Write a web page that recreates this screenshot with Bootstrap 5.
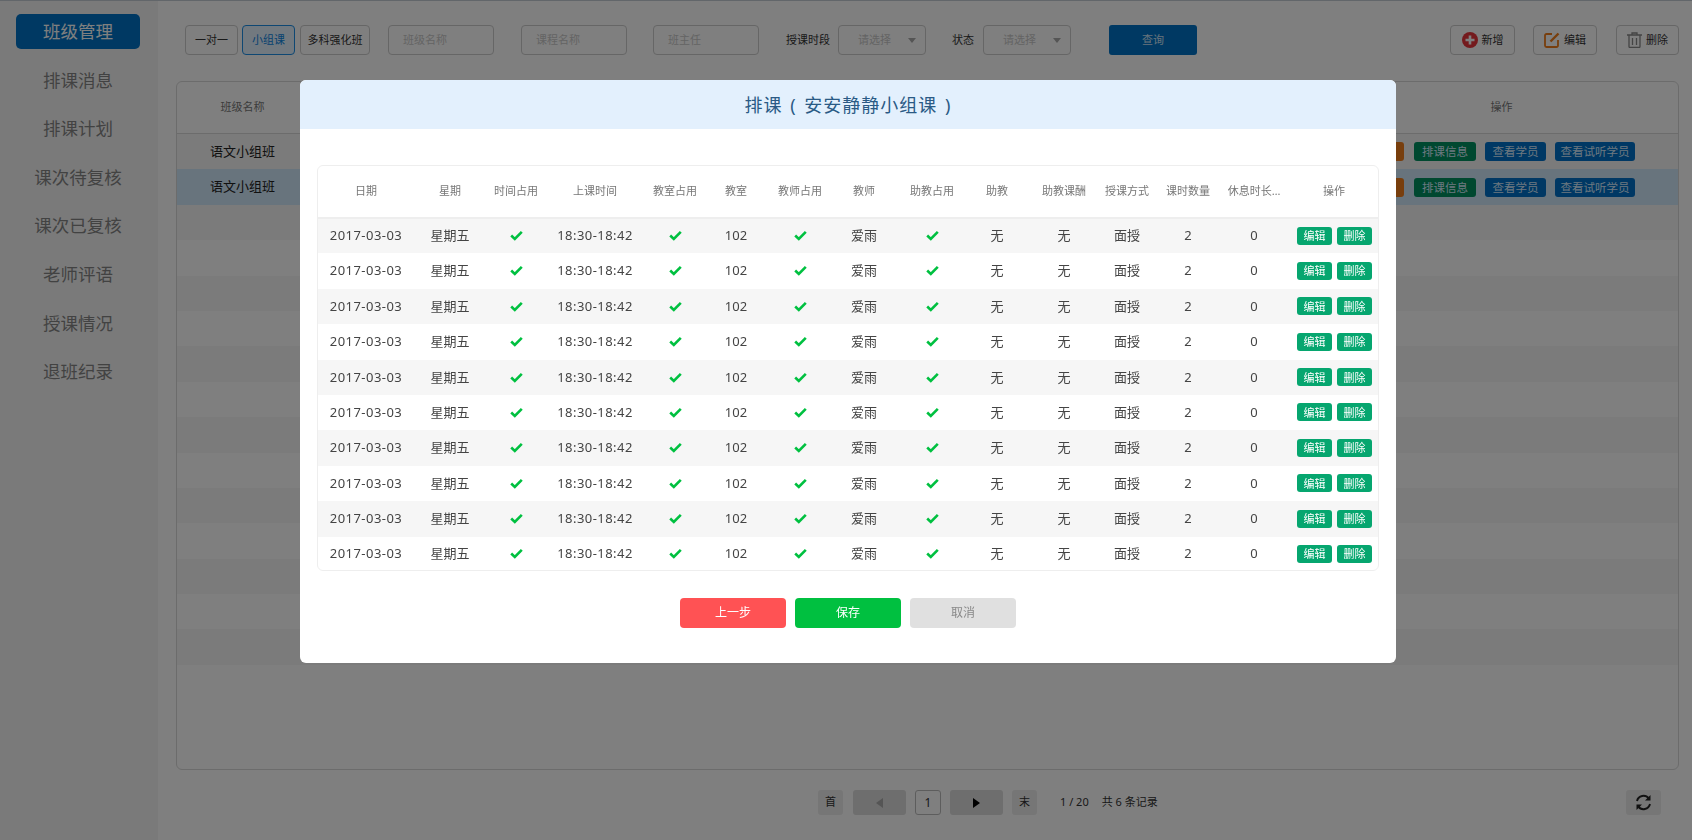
<!DOCTYPE html>
<html lang="zh">
<head>
<meta charset="utf-8">
<title>班级管理</title>
<link href="https://cdn.jsdelivr.net/npm/bootstrap@5.3.0/dist/css/bootstrap.min.css" rel="stylesheet">
<style>
html,body{height:100%;overflow:hidden}
body{font-family:"Noto Sans","Noto Sans CJK SC",sans-serif;background:#fff;color:#333;font-size:12px;border-top:1px solid #c4ccd4}
.app-shell{height:839px}
.side-rail{width:158px;flex:none;background:#f5f5f5;padding-top:13px}
.side-item{display:block;width:124px;height:35px;line-height:35px;margin:0 0 13.6px 16px;text-align:center;font-size:17.5px;color:#858585;border-radius:5px;text-decoration:none}
.side-item.is-on{background:#0072c6;color:#fff}
.main-pane{padding:24px 13px 0 18px;min-width:0}
.tool-row{height:30px;padding-left:9px;margin-bottom:26px}
.tb-btn{height:30px;padding:0;font-size:11px;color:#333;background:#fff;border:1px solid #ccc;border-radius:4px;display:flex;align-items:center;justify-content:center}
.w-one{width:53px}.w-many{width:70px;margin-left:5px}.w-group{width:53px;margin-left:4px;color:#0a84e0;background:#e5f2ff;border-color:#1c8fe6}
.fake-input{height:30px;width:106px;border:1px solid #ccc;border-radius:4px;font-size:11px;color:#c8c8c8;padding-left:14px;display:flex;align-items:center}
.gap-a{margin-left:18px}.gap-b{margin-left:27px}.gap-c{margin-left:26px}.gap-d{margin-left:27px}
.lbl{font-size:11px;color:#333}
.lbl-tail{margin-right:9px}
.fake-select{width:88px;height:30px;border:1px solid #ccc;border-radius:4px;font-size:11px;color:#c8c8c8;position:relative;display:flex;align-items:center;padding-left:19px}
.fake-select::after{content:"";position:absolute;right:9px;top:12px;border:4px solid transparent;border-top:5px solid #aaa;border-left-width:4.5px;border-right-width:4.5px}
.query-btn{width:88px;height:30px;margin-left:38px;background:#0072c6;color:#cfe6f7;border:0;border-radius:3px;font-size:11px;padding:0}
.act-btn{gap:4px}
.act-1{width:65px}
.act-2{width:64px;margin-left:18px}
.act-3{width:63px;margin-left:19px}
.grid-card{height:689px;border:1px solid #d8d8d8;border-radius:6px;overflow:hidden;background:#fff}
.grid-head{height:52px;border-bottom:1px solid #d8d8d8;color:#777;font-size:11px}
.grid-line{height:35.4px;font-size:13px;color:#222}
.grid-line:nth-child(odd){background:#f6f6f6}
.grid-line.is-sel{background:#d0e8fa}
.col-name{width:131px;text-align:center}
.col-ops{margin-left:auto;width:314px;display:flex;gap:9px;justify-content:flex-start}
.head-ops{margin-left:auto;width:353px;text-align:center}
.chip{height:19px;line-height:19px;border-radius:3px;font-size:11.5px;color:#d8efff;text-align:center;border:0;padding:0}
.chip-g{width:62px;background:#009060}.chip-b{width:61px;background:#0070c8}.chip-b2{width:80px;background:#0070c8}
.chip-o{width:40px;background:#f07d1a;margin-right:1px}
.pager{height:25px;margin-top:20px;font-size:11px;color:#333}
.pg-box{height:25px;border-radius:3px;background:#ededed;display:flex;align-items:center;justify-content:center;color:#333}
.pg-s{width:25px}.pg-w{width:53px;background:#dcdcdc;margin-left:9px}.pg-n{width:26px;background:#fff;border:1px solid #bbb;margin-left:9px;font-size:12px}
.pg-prev{margin-left:10px}
.pg-end{margin-left:9px}
.pg-first{margin-left:642px}
.pg-t1{margin-left:23px}.pg-t2{margin-left:13px}
.pg-refresh{width:35px;margin-left:auto;margin-right:18px}
.tri-l{border:5px solid transparent;border-right:7px solid #aaa;border-left:0}
.tri-r{border:5px solid transparent;border-left:7px solid #000;border-right:0}
.mdl-dialog{max-width:1096px;width:1096px;margin:80px 0 0 300px}
.mdl-content{border:0;border-radius:6px;height:583px;overflow:hidden}
.mdl-head{height:49px;background:#e3f0fd;justify-content:center;padding:0;border:0;border-radius:0}
.mdl-title{font-size:18px;letter-spacing:1px;word-spacing:2px;color:#2a5a85;font-weight:400;margin:0;line-height:1}
.mdl-body{padding:36px 17px 0 17px}
.sched-wrap{border:1px solid #eee;border-radius:6px;overflow:hidden;height:406px}
.sched{table-layout:fixed;width:1061px;margin:0 0 0 -1px;border-collapse:collapse;--bs-table-bg:transparent}
.sched th{height:52px;font-size:11px;font-weight:400;color:#777;text-align:center;vertical-align:middle;padding:0;border:0;border-bottom:2px solid #eee;white-space:nowrap;overflow:hidden;box-shadow:none}
.sched td{height:35.4px;font-size:13px;color:#444;text-align:center;vertical-align:middle;padding:0;border:0;white-space:nowrap;box-shadow:none}
.sched tbody tr:nth-child(odd) td{background:#f6f6f6}
.num-wide{letter-spacing:.45px}
.sched .c9{padding-left:9px}
.chk{width:13px;height:11px;display:inline-block;vertical-align:-1px}
.mini{display:inline-block;width:35px;height:18px;line-height:17px;background:#06a66f;color:#fff;border-radius:3px;font-size:11px;text-align:center;border:0;padding:0}
.mini+.mini{margin-left:5px}
.ops-cell{text-align:left!important;padding-left:7px!important}
.foot-row{margin-top:27px;gap:9px}
.foot-btn{width:106px;height:30px;border:0;border-radius:4px;font-size:12px;padding:0;color:#fff}
.fb-red{background:#ff5254}.fb-green{background:#00c040}.fb-grey{background:#e0e0e0;color:#888}
</style>
</head>
<body>
<div class="app-shell d-flex">
  <nav class="side-rail">
    <a class="side-item is-on" href="#">班级管理</a>
    <a class="side-item" href="#">排课消息</a>
    <a class="side-item" href="#">排课计划</a>
    <a class="side-item" href="#">课次待复核</a>
    <a class="side-item" href="#">课次已复核</a>
    <a class="side-item" href="#">老师评语</a>
    <a class="side-item" href="#">授课情况</a>
    <a class="side-item" href="#">退班纪录</a>
  </nav>
  <main class="main-pane flex-grow-1">
    <div class="tool-row d-flex align-items-center">
      <button class="tb-btn w-one">一对一</button>
      <button class="tb-btn w-group">小组课</button>
      <button class="tb-btn w-many">多科强化班</button>
      <div class="fake-input gap-a">班级名称</div>
      <div class="fake-input gap-b">课程名称</div>
      <div class="fake-input gap-c">班主任</div>
      <span class="lbl gap-d me-2">授课时段</span>
      <div class="fake-select">请选择</div>
      <span class="lbl gap-c lbl-tail">状态</span>
      <div class="fake-select">请选择</div>
      <button class="query-btn">查询</button>
      <button class="tb-btn act-btn act-1 ms-auto">
        <svg width="16" height="16" viewBox="0 0 16 16"><circle cx="8" cy="8" r="8" fill="#e8353b"/><path d="M8 3.500v9M3.500 8h9" stroke="#fff" stroke-width="2.600"/></svg>新增</button>
      <button class="tb-btn act-btn act-2">
        <svg width="16" height="16" viewBox="0 0 16 16" fill="none" stroke="#f07d1a" stroke-width="1.800"><path d="M8 2H2.500A1.500 1.500 0 0 0 1 3.500v10A1.500 1.500 0 0 0 2.500 15h10a1.500 1.500 0 0 0 1.500-1.500V8"/><path d="M6.500 9.500 14.500 1.500" stroke-width="2.400"/></svg>编辑</button>
      <button class="tb-btn act-btn act-3">
        <svg width="15" height="16" viewBox="0 0 15 16" fill="none" stroke="#888" stroke-width="1.300"><path d="M0 3h15M5 3V1h5v2M2 3v11.500a1 1 0 0 0 1 1h9a1 1 0 0 0 1-1V3M5.500 6v7M9.500 6v7"/></svg>删除</button>
    </div>
    <div class="grid-card">
      <div class="grid-head d-flex align-items-center"><span class="col-name">班级名称</span><span class="head-ops">操作</span></div>
      <div class="grid-rows">
        <div class="grid-line d-flex align-items-center"><span class="col-name">语文小组班</span><span class="col-ops"><span class="chip chip-o">复核</span><span class="chip chip-g">排课信息</span><span class="chip chip-b">查看学员</span><span class="chip chip-b2">查看试听学员</span></span></div>
        <div class="grid-line is-sel d-flex align-items-center"><span class="col-name">语文小组班</span><span class="col-ops"><span class="chip chip-o">复核</span><span class="chip chip-g">排课信息</span><span class="chip chip-b">查看学员</span><span class="chip chip-b2">查看试听学员</span></span></div>
        <div class="grid-line"></div><div class="grid-line"></div><div class="grid-line"></div><div class="grid-line"></div><div class="grid-line"></div><div class="grid-line"></div><div class="grid-line"></div><div class="grid-line"></div><div class="grid-line"></div><div class="grid-line"></div><div class="grid-line"></div><div class="grid-line"></div><div class="grid-line"></div><div class="grid-line"></div>
      </div>
    </div>
    <div class="pager d-flex align-items-center">
      <span class="pg-box pg-s pg-first">首</span>
      <span class="pg-box pg-w pg-prev"><i class="tri-l"></i></span>
      <span class="pg-box pg-n">1</span>
      <span class="pg-box pg-w"><i class="tri-r"></i></span>
      <span class="pg-box pg-s pg-end">末</span>
      <span class="pg-t1">1 / 20</span>
      <span class="pg-t2">共 6 条记录</span>
      <span class="pg-box pg-refresh">
        <svg width="17" height="17" viewBox="0 0 17 17" fill="none" stroke="#222" stroke-width="1.900"><path d="M2 7a6.600 6.600 0 0 1 11.800-2.400"/><path d="M15 10a6.600 6.600 0 0 1-11.800 2.400"/><path d="M15.500 1v5.500H10z" fill="#222" stroke="none"/><path d="M1.500 16v-5.500H7z" fill="#222" stroke="none"/></svg>
      </span>
    </div>
  </main>
</div>

<div class="modal-backdrop show"></div>
<div class="modal d-block" tabindex="-1">
  <div class="modal-dialog mdl-dialog">
    <div class="modal-content mdl-content">
      <div class="modal-header mdl-head"><h5 class="modal-title mdl-title">排课 ( 安安静静小组课 )</h5></div>
      <div class="modal-body mdl-body">
        <div class="sched-wrap">
          <table class="table sched">
            <colgroup id="cg"></colgroup>
            <thead><tr id="hd"></tr></thead>
            <tbody id="bd"></tbody>
          </table>
        </div>
        <div class="foot-row d-flex justify-content-center">
          <button class="foot-btn fb-red">上一步</button>
          <button class="foot-btn fb-green">保存</button>
          <button class="foot-btn fb-grey">取消</button>
        </div>
      </div>
    </div>
  </div>
</div>
<script>
const W=[98,70,62,96,64,58,70,58,69,70,64,62,60,72,88];
const H=['日期','星期','时间占用','上课时间','教室占用','教室','教师占用','教师','助教占用','助教','助教课酬','授课方式','课时数量','休息时长…','操作'];
const chk='<svg class="chk" viewBox="0 0 13 11"><path d="M1.200 5.500 4.800 9 11.800 1.800" fill="none" stroke="#00c040" stroke-width="2.600"/></svg>';
const R=['<span class="num-wide">2017-03-03</span>','星期五',chk,'<span class="num-wide">18:30-18:42</span>',chk,'102',chk,'爱雨',chk,'无','无','面授','2','0','<button class="mini">编辑</button><button class="mini">删除</button>'];
document.getElementById('cg').innerHTML=W.map(w=>'<col style="width:'+w+'px">').join('');
document.getElementById('hd').innerHTML=H.map((t,i)=>'<th'+(i==8?' class="c9"':'')+'>'+t+'</th>').join('');
const row='<tr>'+R.map((t,i)=>'<td class="'+(i==8?'c9':i==14?'ops-cell':'')+'">'+t+'</td>').join('')+'</tr>';
document.getElementById('bd').innerHTML=row.repeat(10);
</script>
<script src="https://cdn.jsdelivr.net/npm/bootstrap@5.3.0/dist/js/bootstrap.bundle.min.js"></script>
</body>
</html>
